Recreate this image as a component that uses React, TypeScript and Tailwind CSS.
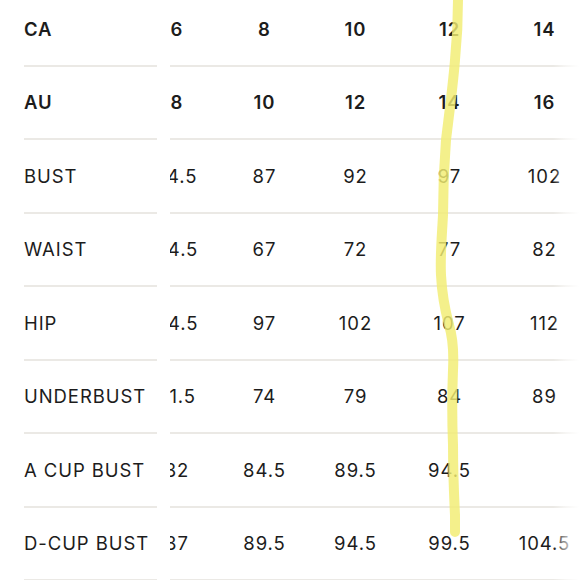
import React from "react";

type Row = { label: string; head?: boolean; values: string[] };

const rows: Row[] = [
  { label: "CA", head: true, values: ["6", "8", "10", "12", "14"] },
  { label: "AU", head: true, values: ["8", "10", "12", "14", "16"] },
  { label: "BUST", values: ["74.5", "87", "92", "97", "102"] },
  { label: "WAIST", values: ["54.5", "67", "72", "77", "82"] },
  { label: "HIP", values: ["84.5", "97", "102", "107", "112"] },
  { label: "UNDERBUST", values: ["71.5", "74", "79", "84", "89"] },
  { label: "A CUP BUST", values: ["82", "84.5", "89.5", "94.5", ""] },
  { label: "D-CUP BUST", values: ["87", "89.5", "94.5", "99.5", "104.5"] },
];

// column widths for the scrolled part of the table
const colW = ["w-[86px]", "w-[89px]", "w-[93px]", "w-[95px]", "w-[95px]"];

export default function App() {
  return (
    <div
      className="relative w-[579px] h-[580px] overflow-hidden bg-white text-[#1c1c1c] text-[18.5px] tracking-[0.05em]"
      style={{ fontFamily: 'Inter, "Open Sans", sans-serif' }}
    >
      <div className="flex -mt-[7px]">
        {/* sticky label column */}
        <div className="ml-[24px] w-[133px] shrink-0 flex flex-col">
          {rows.map((r) => (
            <div
              key={r.label}
              className={`h-[73.5px] pt-[2px] flex items-center whitespace-nowrap border-b-2 border-[#ebe9e5] ${r.head ? "font-semibold" : "font-normal"}`}
            >
              {r.label}
            </div>
          ))}
        </div>

        {/* scrolled columns */}
        <div className="ml-[13px] flex-1 overflow-hidden relative">
          <div className="-ml-[36px] flex flex-col w-[500px]">
            {rows.map((r) => (
              <div key={r.label} className={`h-[73.5px] pt-[2px] flex border-b-2 border-[#ebe9e5] ${r.head ? "font-semibold" : "font-normal"}`}>
                {r.values.map((v, i) => (
                  <div key={i} className={`${colW[i]} shrink-0 flex items-center justify-center`}>
                    {v}
                  </div>
                ))}
              </div>
            ))}
          </div>
          {/* right edge fade */}
          <div className="absolute top-0 right-0 h-full w-[26px] bg-gradient-to-r from-white/0 via-white/60 to-white" />
        </div>
      </div>

      {/* highlighter stroke */}
      <svg className="absolute inset-0 pointer-events-none" width="579" height="580" viewBox="0 0 579 580">
        <path
          d="M458 0 C458 20 457 40 455 60 C453 85 449 115 446 140 C444 165 443 195 443 215 C442 235 440 255 441 275 C442 295 445 310 449 325 C453 338 454 350 453 370 C452 395 452 420 453 445 C453 470 454 495 455 515 L455 532"
          fill="none"
          stroke="#f2ed72"
          strokeOpacity="0.82"
          strokeWidth="10"
          strokeLinecap="round"
          strokeLinejoin="round"
        />
      </svg>
    </div>
  );
}
